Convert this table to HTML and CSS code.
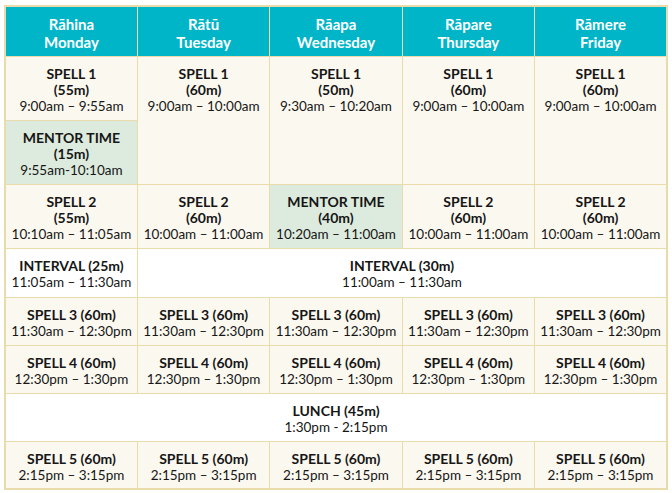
FILE: index.html
```html
<!DOCTYPE html>
<html lang="en">
<head>
<meta charset="utf-8">
<title>Timetable</title>
<link rel="stylesheet" href="styles.css">
</head>
<body>
<table class="timetable">
  <colgroup>
    <col class="col"><col class="col"><col class="col"><col class="col"><col class="col">
  </colgroup>
  <thead>
    <tr class="row-head">
      <th>Rāhina<br>Monday</th>
      <th>Rātū<br>Tuesday</th>
      <th>Rāapa<br>Wednesday</th>
      <th>Rāpare<br>Thursday</th>
      <th>Rāmere<br>Friday</th>
    </tr>
  </thead>
  <tbody>
    <tr class="row-tall">
      <td><b>SPELL 1</b><br><b>(55m)</b><br>9:00am – 9:55am</td>
      <td rowspan="2"><b>SPELL 1</b><br><b>(60m)</b><br>9:00am – 10:00am</td>
      <td rowspan="2"><b>SPELL 1</b><br><b>(50m)</b><br>9:30am – 10:20am</td>
      <td rowspan="2"><b>SPELL 1</b><br><b>(60m)</b><br>9:00am – 10:00am</td>
      <td rowspan="2"><b>SPELL 1</b><br><b>(60m)</b><br>9:00am – 10:00am</td>
    </tr>
    <tr class="row-tall">
      <td class="mentor"><b>MENTOR TIME</b><br><b>(15m)</b><br>9:55am-10:10am</td>
    </tr>
    <tr class="row-tall">
      <td><b>SPELL 2</b><br><b>(55m)</b><br>10:10am – 11:05am</td>
      <td><b>SPELL 2</b><br><b>(60m)</b><br>10:00am – 11:00am</td>
      <td class="mentor"><b>MENTOR TIME</b><br><b>(40m)</b><br>10:20am – 11:00am</td>
      <td><b>SPELL 2</b><br><b>(60m)</b><br>10:00am – 11:00am</td>
      <td><b>SPELL 2</b><br><b>(60m)</b><br>10:00am – 11:00am</td>
    </tr>
    <tr class="row-break">
      <td class="break"><b>INTERVAL (25m)</b><br>11:05am – 11:30am</td>
      <td class="break" colspan="4"><b>INTERVAL (30m)</b><br>11:00am – 11:30am</td>
    </tr>
    <tr class="row-short">
      <td><b>SPELL 3 (60m)</b><br>11:30am – 12:30pm</td>
      <td><b>SPELL 3 (60m)</b><br>11:30am – 12:30pm</td>
      <td><b>SPELL 3 (60m)</b><br>11:30am – 12:30pm</td>
      <td><b>SPELL 3 (60m)</b><br>11:30am – 12:30pm</td>
      <td><b>SPELL 3 (60m)</b><br>11:30am – 12:30pm</td>
    </tr>
    <tr class="row-short">
      <td><b>SPELL 4 (60m)</b><br>12:30pm – 1:30pm</td>
      <td><b>SPELL 4 (60m)</b><br>12:30pm – 1:30pm</td>
      <td><b>SPELL 4 (60m)</b><br>12:30pm – 1:30pm</td>
      <td><b>SPELL 4 (60m)</b><br>12:30pm – 1:30pm</td>
      <td><b>SPELL 4 (60m)</b><br>12:30pm – 1:30pm</td>
    </tr>
    <tr class="row-short">
      <td class="break" colspan="5"><b>LUNCH (45m)</b><br>1:30pm - 2:15pm</td>
    </tr>
    <tr class="row-short">
      <td><b>SPELL 5 (60m)</b><br>2:15pm – 3:15pm</td>
      <td><b>SPELL 5 (60m)</b><br>2:15pm – 3:15pm</td>
      <td><b>SPELL 5 (60m)</b><br>2:15pm – 3:15pm</td>
      <td><b>SPELL 5 (60m)</b><br>2:15pm – 3:15pm</td>
      <td><b>SPELL 5 (60m)</b><br>2:15pm – 3:15pm</td>
    </tr>
  </tbody>
</table>
</body>
</html>
```

FILE: styles.css
```css
html, body {
  margin: 0;
  padding: 0;
  background: #ffffff;
}

body {
  padding: 5px 0 0 4px;
  font-family: Lato, "Liberation Sans", sans-serif;
  color: #161616;
}

.timetable {
  border-collapse: collapse;
  table-layout: fixed;
  width: 664px;
  border: 2px solid #eadcaa;
}

.col {
  width: 20%;
}

.timetable th,
.timetable td {
  border: 1.5px solid #eadcaa;
  text-align: center;
  padding: 0;
}

.timetable th {
  background: #00b5c7;
  color: #ffffff;
  font-size: 15px;
  font-weight: 700;
  line-height: 18px;
  vertical-align: middle;
  padding-top: 3px;
}

.row-head {
  height: 50px;
}

.timetable td {
  background: #fbf8f0;
  font-size: 13.5px;
  line-height: 16px;
  vertical-align: top;
  padding-top: 9px;
}

.timetable td b {
  font-weight: 700;
  font-size: 14px;
}

.row-tall {
  height: 64px;
}

.row-break {
  height: 49px;
}

.row-short {
  height: 48px;
}

.timetable td.mentor {
  background: #dcebdd;
}

.timetable td.break {
  background: #ffffff;
}
```
